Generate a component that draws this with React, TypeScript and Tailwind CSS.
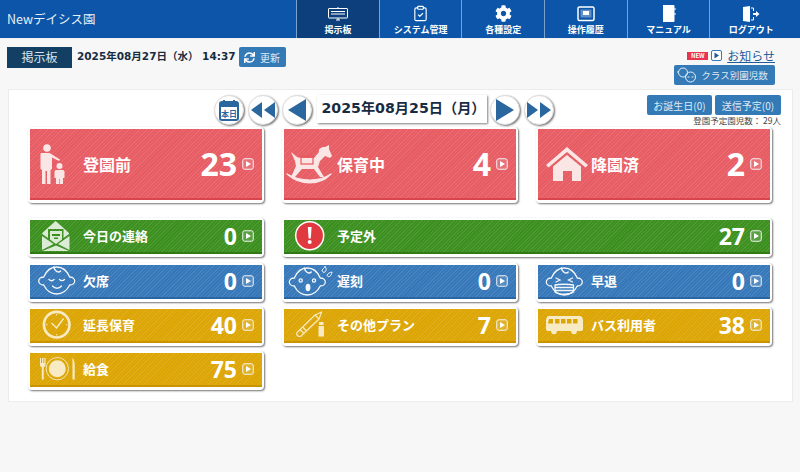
import React from 'react';
import { ClipboardCheck } from 'lucide-react';
import { FaCog, FaSync } from 'react-icons/fa';

const jp = "font-['Noto_Sans_CJK_JP',sans-serif]";
const verdana = "font-['DejaVu_Sans','Noto_Sans_CJK_JP',sans-serif]";
const hatch =
  'bg-[repeating-linear-gradient(135deg,rgba(255,255,255,0.09)_0,rgba(255,255,255,0.09)_1px,transparent_1px,transparent_2.5px)]';

const tones: Record<string, string> = {
  red: 'bg-[#e75b63] border-b-[#d8454d]',
  green: 'bg-[#3b8f1e] border-b-[#2f7a16]',
  blue: 'bg-[#3577b8] border-b-[#2a66a3]',
  yellow: 'bg-[#dca503] border-b-[#c99400]',
};

const Play = () => (
  <svg width="12" height="12" viewBox="0 0 12 12" className="shrink-0">
    <rect x="0.75" y="0.75" width="10.5" height="10.5" rx="2" fill="rgba(255,255,255,0.12)" stroke="#f4f4f4" strokeWidth="1" />
    <path d="M4 3L9 6L4 9Z" fill="#fff" />
  </svg>
);

const ParentIcon = () => (
  <svg width="53" height="71" viewBox="0 0 53 71" fill="#fbe6e6">
    <circle cx="17" cy="20" r="3.8" />
    <path d="M11 25H19C20 25 21 25.500 22 26.500L30 31.500L29 33L22 29.500V41L20.500 42V56H17V43H15.500V56H12V42L10.500 41V27C10.500 26 10.500 25 11 25Z" />
    <circle cx="29.500" cy="38" r="3" />
    <path d="M26 42H33C34 42 34.500 43 34.500 44V50H33V56H29.800V51H29.200V56H26V50H24.500V44C24.500 43 25 42 26 42Z" />
  </svg>
);

const HorseIcon = () => (
  <svg width="53" height="71" viewBox="1 0 53 71">
    <path d="M4 46C12 53 20 55 27 55C34 55 42 52 48 46C42 50 35 52 27 52C19 52 11 50 4 46Z" fill="#fbe6e6" stroke="#fbe6e6" strokeWidth="1.2" strokeLinejoin="round" />
    <path d="M8 24L14 29C14 29 16 30 19 30H31L36 24C35 21 38 19 42 19L46 17L46 21L49 28L47 30L42 28L37 33L35 39L41 49H37L31 41H19L12 49H8L13 38L12 33Z" fill="#fbe6e6" />
    <rect x="18" y="28" width="12" height="8" fill="none" stroke="#e8575f" strokeWidth="1.200" />
  </svg>
);

const HouseIcon = () => (
  <svg width="53" height="71" viewBox="1 0 53 71" fill="#fbe6e6">
    <path d="M30 19L51 37L48.500 39.500L30 24L11.500 39.500L9 37Z" />
    <path d="M30 27L44 38.500V53H35V43H26V53H16V38.500Z" />
  </svg>
);

const MailIcon = () => (
  <svg width="53" height="34" viewBox="0 0 53 34" fill="#dcebd6">
    <path d="M25.700 2L39 14V15L33.500 19V10H18V19L12.300 15V14Z" />
    <path d="M20 12H32V20.500L26 25L20 20.500Z" />
    <path d="M12 17L23.500 25L12 31ZM39.500 17V31L28 25ZM26 26.500L39 32H12.500Z" />
    <path d="M22 15H30V17H22ZM24 18.500H28V20H24Z" fill="#3b8f1e" />
  </svg>
);

const AlertIcon = () => (
  <svg width="53" height="34" viewBox="1 0 53 34">
    <circle cx="26.700" cy="16.700" r="14" fill="#e0393f" stroke="#fff" strokeWidth="1.500" />
    <path d="M24.800 8H28.600L27.800 19.500H25.600Z" fill="#fff" />
    <circle cx="26.700" cy="23" r="2" fill="#fff" />
  </svg>
);

const BabyBase = ({ cx = 26.700, cy = 17, children }: { cx?: number; cy?: number; children?: React.ReactNode }) => (
  <g fill="none" stroke="#f3f7fb" strokeWidth="1.300" strokeLinecap="round">
    <path d={`M${cx - 13} ${cy - 4}C${cx - 10} ${cy - 11} ${cx - 5} ${cy - 14} ${cx} ${cy - 14}C${cx + 5} ${cy - 14} ${cx + 10} ${cy - 11} ${cx + 13} ${cy - 4}C${cx + 16} ${cy - 4} ${cx + 18} ${cy - 2} ${cx + 18} ${cy}C${cx + 18} ${cy + 2} ${cx + 16} ${cy + 4} ${cx + 13} ${cy + 4}C${cx + 10} ${cy + 10} ${cx + 5} ${cy + 13} ${cx} ${cy + 13}C${cx - 5} ${cy + 13} ${cx - 10} ${cy + 10} ${cx - 13} ${cy + 4}C${cx - 16} ${cy + 4} ${cx - 18} ${cy + 2} ${cx - 18} ${cy}C${cx - 18} ${cy - 2} ${cx - 16} ${cy - 4} ${cx - 13} ${cy - 4}Z`} />
    <path d={`M${cx - 3} ${cy - 14}C${cx - 2} ${cy - 9} ${cx + 2} ${cy - 8} ${cx + 4} ${cy - 10}`} />
    {children}
  </g>
);

const SleepBaby = () => (
  <svg width="53" height="34" viewBox="0 0 53 34">
    <BabyBase>
      <path d="M19 15.500C20.500 17 22.500 17 24 15.500M29.500 15.500C31 17 33 17 34.500 15.500M22.500 22C25 25 29 25 31.500 22" />
    </BabyBase>
  </svg>
);

const LateBaby = () => (
  <svg width="53" height="34" viewBox="1 0 53 34">
    <BabyBase cx={24.300} cy={18}>
      <circle cx="17.700" cy="16.500" r="1.600" />
      <circle cx="31" cy="16.500" r="1.600" />
      <ellipse cx="25" cy="23.500" rx="1.800" ry="3" fill="#f3f7fb" />
    </BabyBase>
    <path d="M39 6C41 4 42 3 42 2C43 4 44 6 42 8C41 9 39 8 39 6ZM44 11C45 9 47 8.500 49 8C48.500 10 48 12 46.500 12.500C45 13 44 12 44 11Z" fill="none" stroke="#f3f7fb" strokeWidth="1" />
  </svg>
);

const MaskBaby = () => (
  <svg width="53" height="34" viewBox="1 0 53 34">
    <BabyBase cx={27.300} cy={18}>
      <path d="M19 14L23 16L19 18M35.500 14L31.500 16L35.500 18" />
      <path d="M18 21C22 20 32 20 36.500 21V28C32 31 22 31 18 28ZM18 23.500H36.500M18 26.500H36.500" />
    </BabyBase>
  </svg>
);

const ClockIcon = () => (
  <svg width="53" height="34" viewBox="0 0 53 34">
    <circle cx="26.700" cy="16.700" r="12.800" fill="none" stroke="#f8ebc4" strokeWidth="2.600" />
    <path d="M21.500 15L26.500 20L33.500 10.500" fill="none" stroke="#f8ebc4" strokeWidth="1.400" />
    <path d="M26.700 6V7.500M26.700 26V27.500M16 16.700H17.500M36 16.700H37.500" stroke="#f8ebc4" strokeWidth="1" />
  </svg>
);

const PlateIcon = () => (
  <svg width="53" height="34" viewBox="0 0 53 34" fill="#f8ebc4">
    <circle cx="27.300" cy="16.700" r="11.200" fill="none" stroke="#f8ebc4" strokeWidth="0.900" />
    <circle cx="27.300" cy="16.700" r="8.500" />
    <path d="M10 6H11V11H12V6H13.300V11H14.300V6H15.500V13C15.500 14.500 14.300 15 13.700 15V27.500H11.800V15C11.100 15 10 14.500 10 13Z" />
    <path d="M42.500 6C44 7 44.700 10 44.700 14V27.500H42.500Z" />
  </svg>
);

const PencilIcon = () => (
  <svg width="53" height="34" viewBox="1 0 53 34">
    <g fill="none" stroke="#f8ebc4" strokeWidth="1.100" strokeLinejoin="round">
      <path d="M38.700 4L36 11L18 28C16 29.500 12.500 27 14 24.500L32 7Z" />
      <path d="M32 7L36 11M17 21.500L21 25.500M19.500 19L23.500 23" />
    </g>
    <path d="M36 14H40.500V17H36ZM35.500 18H41V28.500H35.500Z" fill="#f8ebc4" />
  </svg>
);

const BusIcon = () => (
  <svg width="53" height="34" viewBox="1 0 53 34" fill="#f8ebc4">
    <path d="M12 8H43C45 8 46 10 46 13V21C46 22.500 45 23 44 23H11C10 23 9 22.500 9 21V13C9 10 10 8 12 8Z" />
    <circle cx="17" cy="23.500" r="2.800" />
    <circle cx="37" cy="23.500" r="2.800" />
    <path d="M12 11H16V15.500H11ZM18 11H22.500V15.500H18ZM24 11H28.500V15.500H24ZM30 11H34.500V15.500H30ZM36 11H40.500V15.500H36Z" fill="#dca503" />
  </svg>
);

type CardProps = {
  tone: string;
  label: string;
  count: number;
  icon: React.ReactNode;
  large?: boolean;
  className?: string;
};

const Card = ({ tone, label, count, icon, large, className = '' }: CardProps) => (
  <div className={`rounded-[4px] bg-white p-[2px] pb-[3px] shadow-[1px_1px_2px_rgba(0,0,0,0.55)] ${className}`}>
    <div className={`flex items-center border-b-2 pr-[8px] ${hatch} ${tones[tone]} ${large ? 'h-[71px]' : 'h-[34px]'}`}>
      <div className="w-[53px] shrink-0">{icon}</div>
      <span className={`${jp} font-bold text-white ${large ? 'text-[16px]' : 'text-[13px]'}`}>{label}</span>
      <span className={`ml-auto mr-[5px] font-['Open_Sans',sans-serif] font-bold text-white leading-none ${large ? 'text-[32px]' : 'text-[23px]'}`}>
        {count}
      </span>
      <Play />
    </div>
  </div>
);

const RoundButton = ({ children }: { children: React.ReactNode }) => (
  <button className="flex h-[30px] w-[30px] items-center justify-center rounded-full border border-[#ddd] bg-white shadow-[1px_1px_2px_rgba(0,0,0,0.55)]">
    {children}
  </button>
);

const navItems: { label: string; icon: React.ReactNode; active?: boolean }[] = [
  {
    label: '掲示板',
    active: true,
    icon: (
      <svg width="20" height="14" viewBox="0 0 20 14" fill="none" stroke="#fff">
        <rect x="0.500" y="1.500" width="19" height="9.500" rx="0.500" />
        <path d="M3 4.500H17M3 7H17M10 0V1.500M8 13H12M10 11V13" />
      </svg>
    ),
  },
  { label: 'システム管理', icon: <ClipboardCheck size={17} color="#fff" strokeWidth={1.6} /> },
  { label: '各種設定', icon: <FaCog size={17} color="#fff" /> },
  {
    label: '操作履歴',
    icon: (
      <svg width="18" height="16" viewBox="0 0 18 16" fill="none">
        <rect x="1" y="1" width="16" height="13.500" rx="1.500" stroke="#fff" strokeWidth="1.500" />
        <rect x="3.500" y="3.500" width="11" height="8" fill="#fff" fillOpacity="0.35" />
        <path d="M6 5H12V9H6Z" fill="#fff" />
      </svg>
    ),
  },
  {
    label: 'マニュアル',
    icon: (
      <svg width="14" height="17" viewBox="0 0 14 17">
        <path d="M1 0H11.500C12 0 12.500 0.500 12.500 1V16C12.500 16.500 12 17 11.500 17H1Z" fill="#fff" />
        <path d="M13 3V5M13 8V10" stroke="#fff" />
      </svg>
    ),
  },
  {
    label: 'ログアウト',
    icon: (
      <svg width="18" height="16" viewBox="0 0 18 16">
        <path d="M1 1L8 0V16L1 15Z" fill="#fff" />
        <path d="M9 2H11.500V5M11.500 11V14H9" fill="none" stroke="#fff" />
        <path d="M11 7H14V5L17.500 8L14 11V9H11Z" fill="#fff" />
      </svg>
    ),
  },
];

const BlueButton = ({ children, className = '' }: { children: React.ReactNode; className?: string }) => (
  <button className={`flex items-center justify-center rounded-[2px] bg-[#337ab7] text-[#dfeaf4] ${jp} ${className}`}>
    {children}
  </button>
);

export default function App() {
  return (
    <div className={`h-[472px] w-[800px] overflow-hidden bg-[#f7f7f7] ${jp}`}>
      <header className="flex h-[38px] items-stretch bg-[#0c55a8] pr-[8px]">
        <div className="flex flex-1 items-center pl-[7px] text-[12.500px] text-[#e8f0f8]">Newデイシス園</div>
        {navItems.map((item) => (
          <div
            key={item.label}
            className={`flex w-[82.67px] flex-col items-center border-l border-[#7ba2cf] ${item.active ? 'bg-[#0c3f7c]' : ''}`}
          >
            <div className="flex h-[23px] items-center pt-[4px]">{item.icon}</div>
            <div className="text-[9px] font-bold leading-[14px] text-white">{item.label}</div>
          </div>
        ))}
      </header>

      <div className="flex h-[51px] justify-between border-t border-[#f0f0f0] pl-[7px] pr-[25px]">
        <div className="mt-[8px] flex h-[20px] items-center">
          <div className="flex h-[21px] w-[65px] items-center justify-center bg-[#123f63] text-[12px] text-[#dbe6ee]">掲示板</div>
          <div className={`ml-[5px] text-[10.500px] font-bold text-[#172c42] ${verdana}`}>2025年08月27日（水） 14:37</div>
          <BlueButton className="ml-[3px] h-[20px] w-[47px] gap-[5px] text-[10px]">
            <FaSync size={11} color="#fff" />
            更新
          </BlueButton>
        </div>
        <div className="flex flex-col items-end pt-[7px]">
          <div className="flex h-[19px] items-center">
            <span className="mr-[3px] flex h-[8px] w-[21px] items-center justify-center bg-[#e8354f] text-[6px] font-bold text-white">NEW</span>
            <svg width="11" height="11" viewBox="0 0 11 11" className="mr-[5px]">
              <rect x="0.500" y="0.500" width="10" height="10" rx="1.500" fill="#fff" stroke="#337ab7" />
              <path d="M3.500 2.500L8 5.500L3.500 8.500Z" fill="#1f5a99" />
            </svg>
            <a className="text-[12px] text-[#1f5a99] underline">お知らせ</a>
          </div>
          <BlueButton className="h-[20px] w-[101px] gap-[3px] pr-[5px] text-[9.500px]">
            <svg width="22" height="16" viewBox="0 0 22 16" fill="none" stroke="#e8f0f8">
              <circle cx="7" cy="5.500" r="4.500" />
              <circle cx="14.500" cy="10" r="5" />
              <path d="M1 5H2.500M11.500 10H13.500M15.500 10H17.500" />
            </svg>
            クラス別園児数
          </BlueButton>
        </div>
      </div>

      <main className="mx-[8px] h-[313px] w-[785px] border border-[#ececec] bg-white px-[19px]">
        <div className="relative -mx-[19px] flex h-[37px] pt-[5px] pl-[205px] pr-[11px]">
          <div className="flex h-[30px] items-start">
            <RoundButton>
              <svg width="20" height="22" viewBox="0 0 20 22">
                <rect x="1" y="3" width="18" height="18" rx="2" fill="#fff" stroke="#2b679f" strokeWidth="2" />
                <rect x="1" y="3" width="18" height="5" fill="#2b679f" />
                <path d="M5 1V4M15 1V4" stroke="#2b679f" strokeWidth="2" />
                <text x="10" y="18" textAnchor="middle" fontSize="8" fontWeight="700" fill="#2b679f">本日</text>
              </svg>
            </RoundButton>
            <div className="ml-[4px]">
              <RoundButton>
                <svg width="26" height="18" viewBox="0 0 26 18" fill="#2b679f">
                  <path d="M12 1V17L1 9ZM25 1V17L14 9Z" />
                </svg>
              </RoundButton>
            </div>
            <div className="ml-[4px]">
              <RoundButton>
                <svg width="22" height="24" viewBox="0 0 22 24" fill="#2b679f">
                  <path d="M20 1V23L2 12Z" />
                </svg>
              </RoundButton>
            </div>
            <div className={`ml-[5px] mr-[3px] flex h-[28px] w-[170px] items-center justify-center bg-white pl-[3px] text-[14.200px] font-bold text-[#172c42] shadow-[1px_1px_2px_rgba(0,0,0,0.5)] ${verdana}`}>
              2025年08月25日（月）
            </div>
            <RoundButton>
              <svg width="22" height="24" viewBox="0 0 22 24" fill="#2b679f">
                <path d="M2 1V23L20 12Z" />
              </svg>
            </RoundButton>
            <div className="ml-[4px]">
              <RoundButton>
                <svg width="26" height="18" viewBox="0 0 26 18" fill="#2b679f">
                  <path d="M1 1V17L12 9ZM14 1V17L25 9Z" />
                </svg>
              </RoundButton>
            </div>
          </div>
          <div className="ml-auto flex flex-col items-end">
            <div className="flex gap-[3px]">
              <BlueButton className="h-[20px] w-[65px] text-[10px]">お誕生日(0)</BlueButton>
              <BlueButton className="h-[20px] w-[66px] text-[10px]">送信予定(0)</BlueButton>
            </div>
            <div className="text-[8.500px] leading-[11px] text-[#444]">登園予定園児数： 29人</div>
          </div>
        </div>

        <div className="grid grid-cols-3 w-[744px] gap-x-[18px] gap-y-[5px]">
          <Card large tone="red" label="登園前" count={23} icon={<ParentIcon />} className="mb-[10px]" />
          <Card large tone="red" label="保育中" count={4} icon={<HorseIcon />} className="mb-[10px]" />
          <Card large tone="red" label="降園済" count={2} icon={<HouseIcon />} className="mb-[10px]" />
          <Card tone="green" label="今日の連絡" count={0} icon={<MailIcon />} className="mb-[1px]" />
          <Card tone="green" label="予定外" count={27} icon={<AlertIcon />} className="col-span-2 mb-[1px]" />
          <Card tone="blue" label="欠席" count={0} icon={<SleepBaby />} />
          <Card tone="blue" label="遅刻" count={0} icon={<LateBaby />} />
          <Card tone="blue" label="早退" count={0} icon={<MaskBaby />} />
          <Card tone="yellow" label="延長保育" count={40} icon={<ClockIcon />} />
          <Card tone="yellow" label="その他プラン" count={7} icon={<PencilIcon />} />
          <Card tone="yellow" label="バス利用者" count={38} icon={<BusIcon />} />
          <Card tone="yellow" label="給食" count={75} icon={<PlateIcon />} />
        </div>
      </main>
    </div>
  );
}
